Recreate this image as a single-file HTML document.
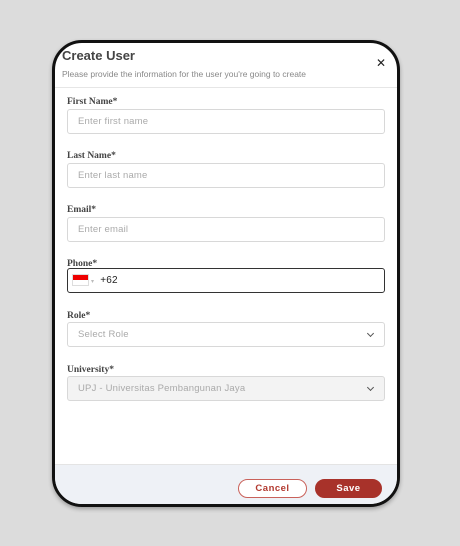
<!DOCTYPE html>
<html><head><style>
*{box-sizing:border-box;margin:0;padding:0}
body{width:460px;height:546px;background:#dcdcdc;font-family:"Liberation Sans",sans-serif;position:relative;overflow:hidden}
.dev{position:absolute;left:52px;top:40px;width:348px;height:467px;border:3px solid #111;border-radius:30px;background:#fff;overflow:hidden;box-shadow:0 2px 4px rgba(0,0,0,.3)}
.hdr{position:absolute;left:0;top:0;width:100%;height:45px;border-bottom:1px solid #e6e6e6}
.t{position:absolute;left:7px;top:5px;font-size:13px;color:#444;font-weight:bold}
.s{position:absolute;left:7px;top:26px;font-size:8.5px;color:#888}
.x{position:absolute;left:321px;top:13px;font-size:12px;color:#222}
.lb{position:absolute;left:12px;font-size:9.5px;font-weight:bold;color:#444;font-family:"Liberation Serif",serif}
.in{position:absolute;left:12px;width:318px;height:25px;border:1px solid #d8d8d8;border-radius:3px;font-size:9.5px;color:#aaa;padding-left:10px;line-height:23px;letter-spacing:.2px}
.chev{position:absolute;right:11px;top:8px;width:5px;height:5px;border-right:1.5px solid #555;border-bottom:1.5px solid #555;transform:rotate(45deg)}
.ftr{position:absolute;left:0;top:421px;width:100%;height:50px;background:#eef1f6;border-top:1px solid #e4e4e4}
.btn{position:absolute;top:14px;height:19px;border-radius:10px;font-size:9.5px;font-weight:bold;text-align:center;line-height:17px;letter-spacing:.5px}
</style></head><body>
<div class="dev">
<div class="hdr"><div class="t">Create User</div><div class="s">Please provide the information for the user you're going to create</div><div class="x">✕</div></div>
<div class="lb" style="top:54px">First Name*</div>
<div class="in" style="top:66px">Enter first name</div>
<div class="lb" style="top:108px">Last Name*</div>
<div class="in" style="top:120px">Enter last name</div>
<div class="lb" style="top:162px">Email*</div>
<div class="in" style="top:174px">Enter email</div>
<div class="lb" style="top:216px">Phone*</div>
<div class="in" style="top:225px;border-color:#333;color:#222;padding-left:4px;font-size:10px"><span style="display:inline-block;width:17px;height:12px;vertical-align:middle;background:linear-gradient(#e00 50%,#fff 50%);border:1px solid #ddd"></span><span style="color:#bbb;font-size:6px;margin:0 6px 0 2px">▾</span>+62</div>
<div class="lb" style="top:268px">Role*</div>
<div class="in" style="top:279px">Select Role<div class="chev"></div></div>
<div class="lb" style="top:322px">University*</div>
<div class="in" style="top:333px;background:#f3f3f3">UPJ - Universitas Pembangunan Jaya<div class="chev"></div></div>
<div class="ftr">
<div class="btn" style="left:183px;width:69px;border:1px solid #c9615a;color:#b2392f;background:#fff">Cancel</div>
<div class="btn" style="left:260px;width:67px;background:#a8322a;color:#fff;border:1px solid #a8322a">Save</div>
</div>
</div>
</body></html>
